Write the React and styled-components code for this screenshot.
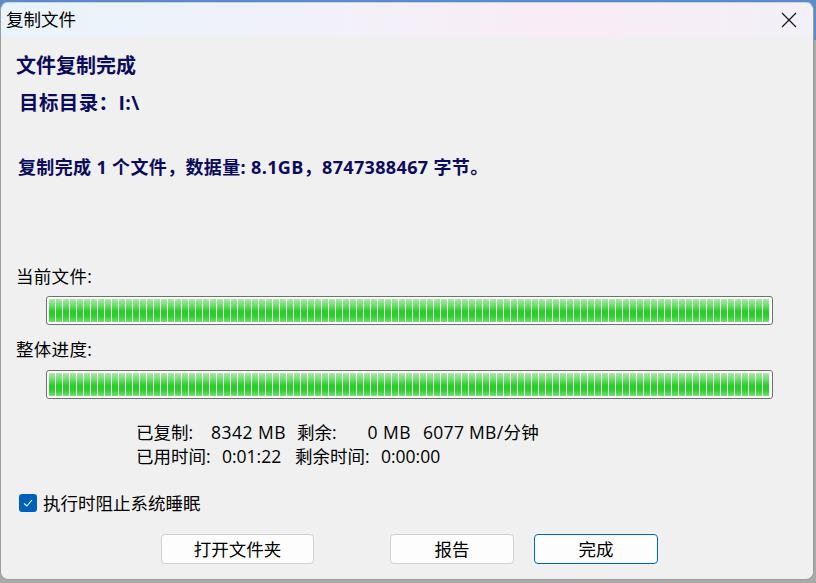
import React from "react";
import styled, { createGlobalStyle } from "styled-components";

const FONT = `"Open Sans", "Noto Sans CJK SC", sans-serif`;

const Global = createGlobalStyle`
  html, body { margin: 0; padding: 0; }
  body {
    width: 816px;
    height: 583px;
    overflow: hidden;
    background: linear-gradient(to bottom, #5b8cc9 0px, #5b8cc9 40px, #a9a9a9 40px, #a9a9a9 100%);
    font-family: ${FONT};
  }
`;

const Window = styled.div`
  margin-top: 2px;
  width: 812px;
  height: 576px;
  border: 1px solid #9c9c9c;
  border-top-color: #c8d4e0;
  border-radius: 8px;
  overflow: hidden;
  background: #f0f0f0;
  display: flex;
  flex-direction: column;
`;

const TitleBar = styled.div`
  height: 34px;
  flex: none;
  display: flex;
  align-items: center;
  justify-content: space-between;
  padding: 0 16px 0 5px;
  background: linear-gradient(to right, #e9f4fa 0%, #f2f1f9 40%, #f9ecf6 70%, #f2f0f8 100%);
`;

const TitleText = styled.div`
  font-size: 17.5px;
  color: #000;
  line-height: 22px;
  margin-top: -2px;
`;

const CloseBtn = styled.div`
  width: 16px;
  height: 16px;
  display: flex;
  margin-top: -1px;
`;

const Body = styled.div`
  flex: 1;
  display: flex;
  flex-direction: column;
  padding-left: 15px;
`;

const Heading = styled.div`
  font-size: ${p => p.size || 20}px;
  font-weight: 700;
  color: #0b0b5c;
  line-height: ${p => p.lh || 24}px;
  margin-top: ${p => p.mt || 0}px;
  margin-left: ${p => p.ml || 0}px;
  letter-spacing: ${p => p.ls || 0}px;
  white-space: nowrap;
`;

const Label = styled.div`
  font-size: 17.5px;
  color: #000;
  line-height: 22px;
  margin-top: ${p => p.mt || 0}px;
  letter-spacing: 0.3px;
`;

const Bar = styled.div`
  margin-top: ${p => p.mt || 0}px;
  margin-left: 30px;
  width: 727px;
  height: 29px;
  box-sizing: border-box;
  border: 1px solid #6f6f6f;
  border-radius: 3px;
  background: #fff;
  padding: 2px 3px 2px 2px;
  display: flex;
`;

const Fill = styled.div`
  flex: 1;
  background:
    repeating-linear-gradient(to right, transparent 0 6px, #ffffff 6px 7px),
    linear-gradient(to bottom, #a9eaa9 0%, #66dc66 30%, #24cf24 55%, #2bd12b 75%, #72e172 100%);
`;

const Stats = styled.div`
  margin-top: ${p => p.mt || 0}px;
  margin-left: 120px;
  display: flex;
  flex-direction: column;
`;

const StatRow = styled.div`
  display: flex;
  font-size: 17.5px;
  line-height: 24px;
  color: #000;
  white-space: nowrap;
`;

const Cell = styled.span`
  width: ${p => (p.w ? `${p.w}px` : "auto")};
  text-align: ${p => p.align || "left"};
  padding-left: ${p => p.pl || 0}px;
  letter-spacing: ${p => p.ls || 0}px;
  flex: none;
  box-sizing: border-box;
`;

const CheckRow = styled.label`
  margin-top: ${p => p.mt || 0}px;
  margin-left: 3px;
  display: flex;
  align-items: center;
  gap: 6px;
  font-size: 17.5px;
  line-height: 22px;
  color: #000;
`;

const CheckBox = styled.span`
  width: 18px;
  height: 18px;
  border-radius: 3px;
  background: #005fb8;
  display: flex;
  align-items: center;
  justify-content: center;
`;

const ButtonRow = styled.div`
  margin-top: ${p => p.mt || 0}px;
  margin-left: 145px;
  display: flex;
`;

const Button = styled.button`
  width: ${p => p.w}px;
  height: 30px;
  margin-left: ${p => p.ml || 0}px;
  box-sizing: border-box;
  border: 1px solid ${p => (p.primary ? "#0067c0" : "#d0d0d0")};
  border-radius: 4px;
  background: #fdfdfd;
  font-family: ${FONT};
  font-size: 17.5px;
  color: #000;
  padding: 0;
  line-height: 28px;
`;

export default function App() {
  return (
    <>
      <Global />
      <Window>
        <TitleBar>
          <TitleText>复制文件</TitleText>
          <CloseBtn>
            <svg width="16" height="16" viewBox="0 0 16 16">
              <path d="M1 1 L15 15 M15 1 L1 15" stroke="#1a1a1a" strokeWidth="1.3" fill="none" />
            </svg>
          </CloseBtn>
        </TitleBar>
        <Body>
          <Heading mt={17}>文件复制完成</Heading>
          <Heading mt={13} ml={3} size={19.5} ls={0.4}>目标目录：I:\</Heading>
          <Heading mt={41} ml={2} size={18} lh={22} ls={0.35}>
            复制完成 1 个文件，数据量: 8.1GB，8747388467 字节。
          </Heading>
          <Label mt={87}>当前文件:</Label>
          <Bar mt={9}><Fill /></Bar>
          <Label mt={13}>整体进度:</Label>
          <Bar mt={10}><Fill /></Bar>
          <Stats mt={21}>
            <StatRow>
              <Cell w={72}>已复制:</Cell>
              <Cell w={78} align="right" ls={0.5}>8342 MB</Cell>
              <Cell w={60} pl={11}>剩余:</Cell>
              <Cell w={65} align="right" ls={0.5}>0 MB</Cell>
              <Cell pl={12} ls={0.3}>6077 MB/分钟</Cell>
            </StatRow>
            <StatRow>
              <Cell w={86}>已用时间:</Cell>
              <Cell w={73}>0:01:22</Cell>
              <Cell w={86}>剩余时间:</Cell>
              <Cell>0:00:00</Cell>
            </StatRow>
          </Stats>
          <CheckRow mt={24}>
            <CheckBox>
              <svg width="12" height="12" viewBox="0 0 12 12">
                <path d="M2 6.3 L4.8 9 L10 3" stroke="#fff" strokeWidth="1.1" fill="none" />
              </svg>
            </CheckBox>
            执行时阻止系统睡眠
          </CheckRow>
          <ButtonRow mt={20}>
            <Button w={153}>打开文件夹</Button>
            <Button w={124} ml={76}>报告</Button>
            <Button w={124} ml={20} primary>完成</Button>
          </ButtonRow>
        </Body>
      </Window>
    </>
  );
}
